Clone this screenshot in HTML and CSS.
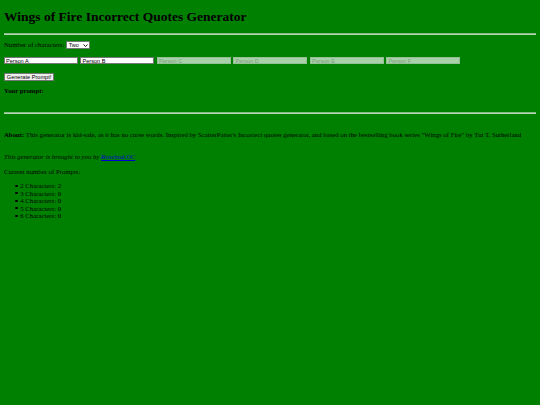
FILE: index.html
```html
<!DOCTYPE html>
<html>
<head>
<meta charset="utf-8">
<title>Wings of Fire Incorrect Quotes Generator</title>
<link rel="stylesheet" href="styles.css">
</head>
<body>
<h1 class="title">Wings of Fire Incorrect Quotes Generator</h1>
<hr class="rule rule-top">
<div class="count-row">
  <span>Number of characters:</span>
  <span class="select-wrap">
    <select class="count"><option>Two</option><option>Three</option><option>Four</option><option>Five</option><option>Six</option></select>
    <svg class="chev" viewBox="0 0 10 6" width="5" height="3"><path d="M1 1 L5 5 L9 1" fill="none" stroke="#000" stroke-width="1.8"/></svg>
  </span>
</div>
<div class="names">
  <input class="name" type="text" placeholder="Person A" value="Person A">
  <input class="name" type="text" placeholder="Person B" value="Person B">
  <input class="name" type="text" placeholder="Person C" disabled>
  <input class="name" type="text" placeholder="Person D" disabled>
  <input class="name" type="text" placeholder="Person E" disabled>
  <input class="name" type="text" placeholder="Person F" disabled>
</div>
<button class="gen" type="button">Generate Prompt!</button>
<p class="prompt-label"><b>Your prompt:</b></p>
<div class="prompt"></div>
<hr class="rule rule-mid">
<p class="about"><b>About:</b> This generator is kid-safe, as it has no curse words. Inspired by ScatterPatter's Incorrect quotes generator, and based on the bestselling book series "Wings of Fire" by Tui T. Sutherland</p>
<p class="credit"><i>This generator is brought to you by <a class="link" href="#">Rosebud.OC</a></i></p>
<p class="counts-label">Current number of Prompts:</p>
<ul class="counts">
  <li>2 Characters: 2</li>
  <li>3 Characters: 0</li>
  <li>4 Characters: 0</li>
  <li>5 Characters: 0</li>
  <li>6 Characters: 0</li>
</ul>
</body>
</html>
```
FILE: styles.css
```css
html {
  background: #008000;
}
body {
  margin: 4px;
  font-family: "Liberation Serif", serif;
  font-size: 6.75px;
  line-height: 7.6px;
  color: #000;
}
p {
  margin: 0;
}
.title {
  margin: 5px 0 0;
  font-size: 13.5px;
  line-height: 15.5px;
  font-weight: bold;
}
.rule {
  height: 0;
  margin: 0;
  border: none;
  border-top: 1px solid #86bb86;
  border-bottom: 1px solid #b3d8b3;
}
.rule-top {
  margin-top: 8.5px;
}
.count-row {
  display: flex;
  align-items: center;
  gap: 1.8px;
  height: 9.5px;
  margin-top: 5.2px;
}
.select-wrap {
  position: relative;
  display: inline-flex;
}
.count {
  appearance: none;
  -webkit-appearance: none;
  width: 24px;
  height: 7.3px;
  margin: 0;
  padding: 0 0 0 1.5px;
  border: 0.5px solid #767676;
  border-radius: 1px;
  background: #fff;
  font-family: "Liberation Sans", sans-serif;
  font-size: 5.6px;
  line-height: 6px;
  color: #000;
}
.chev {
  position: absolute;
  right: 2.5px;
  top: 2.3px;
  pointer-events: none;
}
.names {
  display: flex;
  gap: 2.9px;
  margin-top: 7px;
}
.name {
  box-sizing: border-box;
  width: 73.6px;
  height: 7.8px;
  margin: 0;
  padding: 0 1px;
  border: 0.6px solid #767676;
  border-radius: 0;
  background: #fff;
  font-family: "Liberation Sans", sans-serif;
  font-size: 5.6px;
  color: #000;
}
.name::placeholder {
  color: #757575;
}
.name:disabled {
  background: #a9d1a9;
  border-color: #93bf93;
}
.name:disabled::placeholder {
  color: #7c9c7c;
}
.gen {
  display: block;
  box-sizing: border-box;
  height: 8px;
  margin: 8.2px 0 0;
  padding: 0 1.8px;
  border: 0.6px solid #767676;
  border-radius: 1px;
  background: #efefef;
  font-family: "Liberation Sans", sans-serif;
  font-size: 5.6px;
  line-height: 6px;
  color: #000;
}
.prompt-label {
  margin-top: 6.4px;
}
.prompt {
  height: 0;
}
.rule-mid {
  margin-top: 17.5px;
}
.about {
  margin-top: 16.5px;
}
.credit {
  margin-top: 14.8px;
}
.link {
  color: #0000cc;
}
.counts-label {
  margin-top: 7.3px;
}
.counts {
  margin: 6.6px 0 0;
  padding-left: 16.3px;
  list-style: none;
}
.counts li {
  line-height: 7.5px;
}
.counts li::before {
  content: "";
  display: inline-block;
  width: 2.3px;
  height: 2.3px;
  margin-left: -5px;
  margin-right: 2.7px;
  border-radius: 50%;
  background: #000;
  vertical-align: 1.2px;
}
```
